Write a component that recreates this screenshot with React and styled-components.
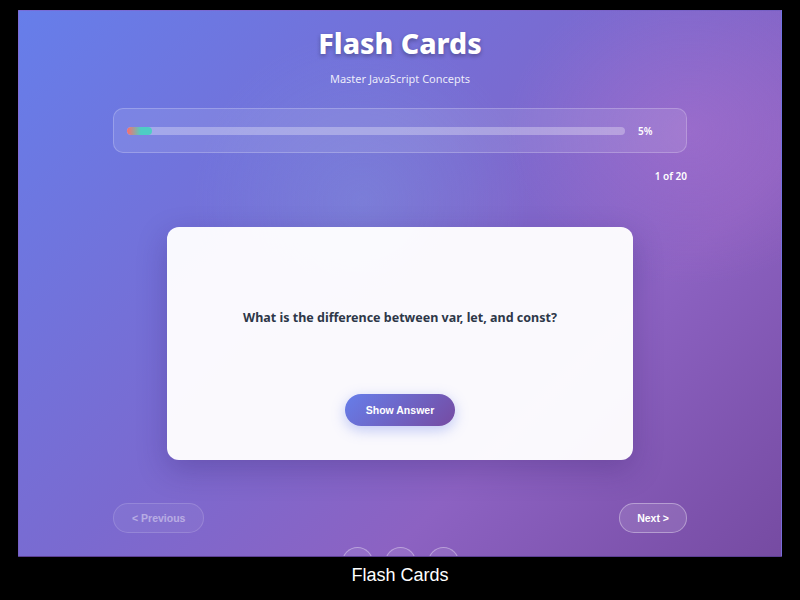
import React from "react";
import styled, { createGlobalStyle } from "styled-components";

const Global = createGlobalStyle`
  html, body { margin: 0; padding: 0; background: #000; }
  body { width: 800px; height: 600px; overflow: hidden; }
  * { box-sizing: border-box; }
`;

const Page = styled.div`
  width: 800px;
  height: 600px;
  display: flex;
  flex-direction: column;
  align-items: center;
  padding-top: 10px;
  background: #000;
`;

const Frame = styled.div`
  width: 764px;
  height: 547px;
  overflow: hidden;
  border: 1px solid rgba(120, 110, 220, 0.6);
  border-bottom-color: #5b3f93;
  background:
    radial-gradient(ellipse 260px 220px at 88% 22%, rgba(190, 120, 210, 0.35), transparent 70%),
    radial-gradient(ellipse 240px 240px at 45% 35%, rgba(130, 170, 230, 0.28), transparent 70%),
    linear-gradient(135deg, #667eea 0%, #7a6ad0 45%, #8c62c2 70%, #764ba2 100%);
  display: flex;
  flex-direction: column;
  align-items: center;
  padding-top: 15px;
  font-family: "Noto Sans", "Open Sans", sans-serif;
`;

const Container = styled.div`
  width: 574px;
  display: flex;
  flex-direction: column;
  align-items: stretch;
`;

const Title = styled.h1`
  margin: 0;
  text-align: center;
  color: #fff;
  font-size: 28.5px;
  line-height: 34px;
  font-weight: 800;
  text-shadow: 0 2px 4px rgba(0, 0, 0, 0.3);
`;

const Subtitle = styled.p`
  margin: 11px 0 0;
  text-align: center;
  color: rgba(255, 255, 255, 0.88);
  font-size: 11px;
  line-height: 16px;
`;

const ProgressBox = styled.div`
  margin-top: 21px;
  height: 45px;
  border-radius: 10px;
  background: rgba(255, 255, 255, 0.1);
  border: 1px solid rgba(255, 255, 255, 0.22);
  display: flex;
  align-items: center;
  padding: 0 14px 0 13px;
  gap: 13px;
`;

const Track = styled.div`
  flex: 1;
  height: 8px;
  border-radius: 4px;
  background: rgba(255, 255, 255, 0.3);
  overflow: hidden;
`;

const Fill = styled.div`
  height: 100%;
  border-radius: 4px;
  background: linear-gradient(90deg, #ff6b6b 0%, #4ecdc4 55%);
`;

const Percent = styled.span`
  width: 34px;
  color: #fff;
  font-size: 10px;
  font-weight: 600;
`;

const Count = styled.div`
  margin-top: 16px;
  text-align: right;
  color: #fff;
  font-size: 10px;
  line-height: 14px;
  font-weight: 600;
`;

const Card = styled.div`
  margin: 44px auto 0;
  width: 466px;
  height: 233px;
  border-radius: 12px;
  background: rgba(255, 255, 255, 0.96);
  box-shadow: 0 10px 30px rgba(40, 20, 90, 0.25);
  display: flex;
  flex-direction: column;
  align-items: center;
  padding-top: 82px;
`;

const Question = styled.h2`
  margin: 0;
  color: #2d3748;
  font-size: 12.5px;
  line-height: 18px;
  font-weight: 700;
  text-align: center;
`;

const ShowButton = styled.button`
  margin-top: 67px;
  width: 110px;
  height: 32px;
  border: none;
  border-radius: 16px;
  background: linear-gradient(135deg, #667eea 0%, #764ba2 100%);
  color: #fff;
  font-family: "Liberation Sans", Arial, sans-serif;
  font-size: 10.5px;
  font-weight: 700;
  box-shadow: 0 4px 14px rgba(102, 126, 234, 0.4);
  cursor: pointer;
`;

const Nav = styled.div`
  margin-top: 43px;
  display: flex;
  justify-content: space-between;
`;

const NavButton = styled.button`
  height: 30px;
  padding: 0 ${(p) => p.$pad}px;
  border-radius: 15px;
  border: 1px solid rgba(255, 255, 255, 0.35);
  background: rgba(255, 255, 255, 0.12);
  color: #fff;
  font-family: "Liberation Sans", Arial, sans-serif;
  font-size: 10.5px;
  font-weight: 700;
  opacity: ${(p) => (p.disabled ? 0.45 : 1)};
  cursor: pointer;
`;

const Dots = styled.div`
  margin-top: 14px;
  display: flex;
  justify-content: center;
  gap: 12px;
`;

const Dot = styled.div`
  width: 31px;
  height: 31px;
  border-radius: 50%;
  border: 1px solid rgba(255, 255, 255, 0.35);
  background: rgba(255, 255, 255, 0.08);
`;

const Caption = styled.div`
  margin-top: 7px;
  color: #fff;
  font-family: "Liberation Sans", Arial, sans-serif;
  font-size: 18px;
  line-height: 22px;
`;

export default function App() {
  const progress = 5;
  return (
    <>
      <Global />
      <Page>
        <Frame>
          <Container>
            <Title>Flash Cards</Title>
            <Subtitle>Master JavaScript Concepts</Subtitle>
            <ProgressBox>
              <Track>
                <Fill style={{ width: `${progress}%` }} />
              </Track>
              <Percent>{progress}%</Percent>
            </ProgressBox>
            <Count>1 of 20</Count>
            <Card>
              <Question>What is the difference between var, let, and const?</Question>
              <ShowButton>Show Answer</ShowButton>
            </Card>
            <Nav>
              <NavButton disabled $pad={18}>&lt; Previous</NavButton>
              <NavButton $pad={17}>Next &gt;</NavButton>
            </Nav>
            <Dots>
              <Dot />
              <Dot />
              <Dot />
            </Dots>
          </Container>
        </Frame>
        <Caption>Flash Cards</Caption>
      </Page>
    </>
  );
}
